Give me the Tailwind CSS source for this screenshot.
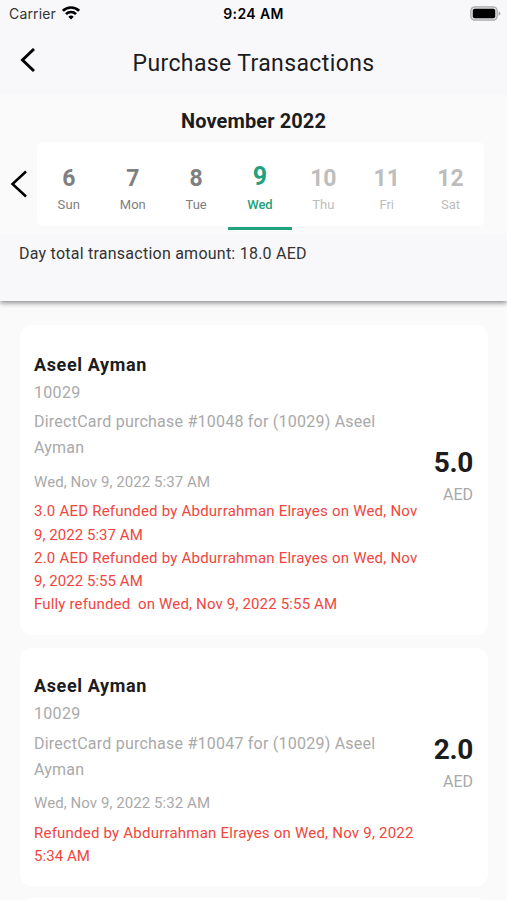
<!DOCTYPE html>
<html lang="en">
<head>
<meta charset="utf-8">
<title>Purchase Transactions</title>
<script src="https://cdn.jsdelivr.net/npm/@tailwindcss/browser@4"></script>
</head>
<body class="h-[900px] w-[507px] overflow-hidden bg-[#fafafa] font-[Roboto,sans-serif] text-[#1c1c1e]">
<div class="flex h-[900px] flex-col overflow-hidden">
  <header class="relative z-10 h-[301px] shrink-0 bg-[#f8f8fb] shadow-[0_2px_5px_rgba(0,0,0,0.45)]">
    <div class="grid h-7 grid-cols-3 items-center pr-[6px] pl-[9px] font-[Inter,sans-serif] text-[14px] leading-7">
      <div class="flex items-center gap-[6px] text-[#333]"><span class="tracking-[0.15px]">Carrier</span>
        <svg class="-mt-[2px] h-[14px] w-[18px]" viewBox="0 0 18 14" fill="none" stroke="#000" stroke-width="2.6"><path d="M.9 4.8a11.5 11.5 0 0 1 16.2 0M4 8.1a7.1 7.1 0 0 1 10 0"/><path d="M9 13.5 6.3 10.8a3.8 3.8 0 0 1 5.4 0Z" fill="#000" stroke="none"/></svg>
      </div>
      <div class="-ml-[3px] text-center font-semibold tracking-[0.4px] whitespace-nowrap text-black">9:24 AM</div>
      <svg class="-mt-[2px] h-[15px] w-[31px] justify-self-end" viewBox="0 0 31 15"><rect x=".8" y=".8" width="26.4" height="13.4" rx="4" fill="#ddd" stroke="#aaa" stroke-width="1.2"/><rect x="2.8" y="2.8" width="22.4" height="9.4" rx="2" fill="#000"/><path d="M28.5 5.2q2 .7 2 2.3t-2 2.3Z" fill="#aaa"/></svg>
    </div>
    <div class="grid h-[67px] grid-cols-[60px_1fr_60px] items-center">
      <svg class="mb-[3px] ml-5 h-6 w-[16px]" viewBox="0 0 16 24" fill="none" stroke="#000" stroke-width="2.9"><path d="M14 1 2.5 12 14 23"/></svg>
      <h1 class="pt-[5px] text-center text-[23px] leading-8 tracking-[0.38px] whitespace-nowrap">Purchase Transactions</h1>
    </div>
    <section class="h-[140px] bg-[#fafafa]">
      <h2 class="h-[47px] pt-3 text-center text-[20px] leading-7 font-bold tracking-[0.1px]">November 2022</h2>
      <div class="flex items-center">
        <div class="w-[37px]"><svg class="ml-[10px] h-7 w-[17px]" viewBox="0 0 17 28" fill="none" stroke="#000" stroke-width="2.5"><path d="M16 1.5 2.5 14 16 26.5"/></svg></div>
        <div class="grid h-[84px] w-[447px] grid-cols-7 rounded-md bg-white text-center text-[#808080]">
          <div class="pt-[23px]"><div class="text-[23px] leading-7 font-bold">6</div><div class="text-[13px] leading-[23px] tracking-[0.2px]">Sun</div></div>
          <div class="pt-[23px]"><div class="text-[23px] leading-7 font-bold">7</div><div class="text-[13px] leading-[23px]">Mon</div></div>
          <div class="-ml-px pt-[23px]"><div class="text-[23px] leading-7 font-bold">8</div><div class="text-[13px] leading-[23px]">Tue</div></div>
          <div class="-ml-px h-[88px] border-b-[3px] border-[#20a37c] pt-[20px] text-[#20a37c]"><div class="text-[25px] leading-[30px] font-bold">9</div><div class="pt-px text-[13px] leading-6 font-medium tracking-[-0.1px]">Wed</div></div>
          <div class="-ml-[2px] pt-[23px] text-[#bdbdbd]"><div class="text-[23px] leading-7 font-bold">10</div><div class="text-[13px] leading-[23px]">Thu</div></div>
          <div class="-ml-[3px] pt-[23px] text-[#bdbdbd]"><div class="text-[23px] leading-7 font-bold">11</div><div class="text-[13px] leading-[23px]">Fri</div></div>
          <div class="-ml-[3px] pt-[23px] text-[#bdbdbd]"><div class="text-[23px] leading-7 font-bold">12</div><div class="text-[13px] leading-[23px]">Sat</div></div>
        </div>
      </div>
    </section>
    <p class="pt-[7px] pl-[19px] text-[16px] leading-6 tracking-[0.24px] text-[#333]">Day total transaction amount: 18.0 AED</p>
  </header>
  <main class="flex flex-col gap-[13px] px-5 pt-6 pr-[19px]">
    <article class="flex h-[310px] shrink-0 items-center justify-between rounded-xl bg-white pr-[15px] pl-[14px] whitespace-nowrap">
      <div class="h-full pt-[27px]">
        <h3 class="text-[18px] leading-[26px] font-bold tracking-[0.62px]">Aseel Ayman</h3>
        <p class="text-[16px] leading-[30px] tracking-[0.3px] text-[#a9a9a9]">10029</p>
        <p class="pt-px text-[16px] leading-[26px] tracking-[0.23px] text-[#a9a9a9]">DirectCard purchase #10048 for (10029) Aseel<br>Ayman</p>
        <p class="pt-[6px] text-[15px] leading-[31px] tracking-[0.07px] text-[#a9a9a9]">Wed, Nov 9, 2022 5:37 AM</p>
        <p class="pt-[2.4px] text-[15px] leading-[23.2px] tracking-[0.22px] text-[#f0463d]">3.0 AED Refunded by Abdurrahman Elrayes on Wed, Nov<br><span class="tracking-[0.05px]">9, 2022 5:37 AM</span><br>2.0 AED Refunded by Abdurrahman Elrayes on Wed, Nov<br><span class="tracking-[0.05px]">9, 2022 5:55 AM</span><br><span class="tracking-[0.16px]">Fully refunded&nbsp; on Wed, Nov 9, 2022 5:55 AM</span></p>
      </div>
      <div class="pb-[6px] text-right"><div class="text-[28px] leading-9 font-bold tracking-[-0.3px]">5.0</div><div class="text-[16px] leading-7 text-[#a9a9a9]">AED</div></div>
    </article>
    <article class="flex h-[238px] shrink-0 items-center justify-between rounded-xl bg-white pr-[15px] pl-[14px] whitespace-nowrap">
      <div class="h-full pt-[25px]">
        <h3 class="text-[18px] leading-[26px] font-bold tracking-[0.62px]">Aseel Ayman</h3>
        <p class="text-[16px] leading-[30px] tracking-[0.3px] text-[#a9a9a9]">10029</p>
        <p class="pt-[2px] text-[16px] leading-[26px] tracking-[0.23px] text-[#a9a9a9]">DirectCard purchase #10047 for (10029) Aseel<br>Ayman</p>
        <p class="pt-[5px] text-[15px] leading-[31px] tracking-[0.07px] text-[#a9a9a9]">Wed, Nov 9, 2022 5:32 AM</p>
        <p class="pt-[3px] text-[15px] leading-[23.2px] tracking-[0.22px] text-[#f0463d]">Refunded by Abdurrahman Elrayes on Wed, Nov 9, 2022<br><span class="tracking-[0.05px]">5:34 AM</span></p>
      </div>
      <div class="pb-[6px] text-right"><div class="text-[28px] leading-9 font-bold tracking-[-0.3px]">2.0</div><div class="text-[16px] leading-7 text-[#a9a9a9]">AED</div></div>
    </article>
    <article class="-mt-px h-20 shrink-0 rounded-xl bg-white"></article>
  </main>
</div>
</body>
</html>
